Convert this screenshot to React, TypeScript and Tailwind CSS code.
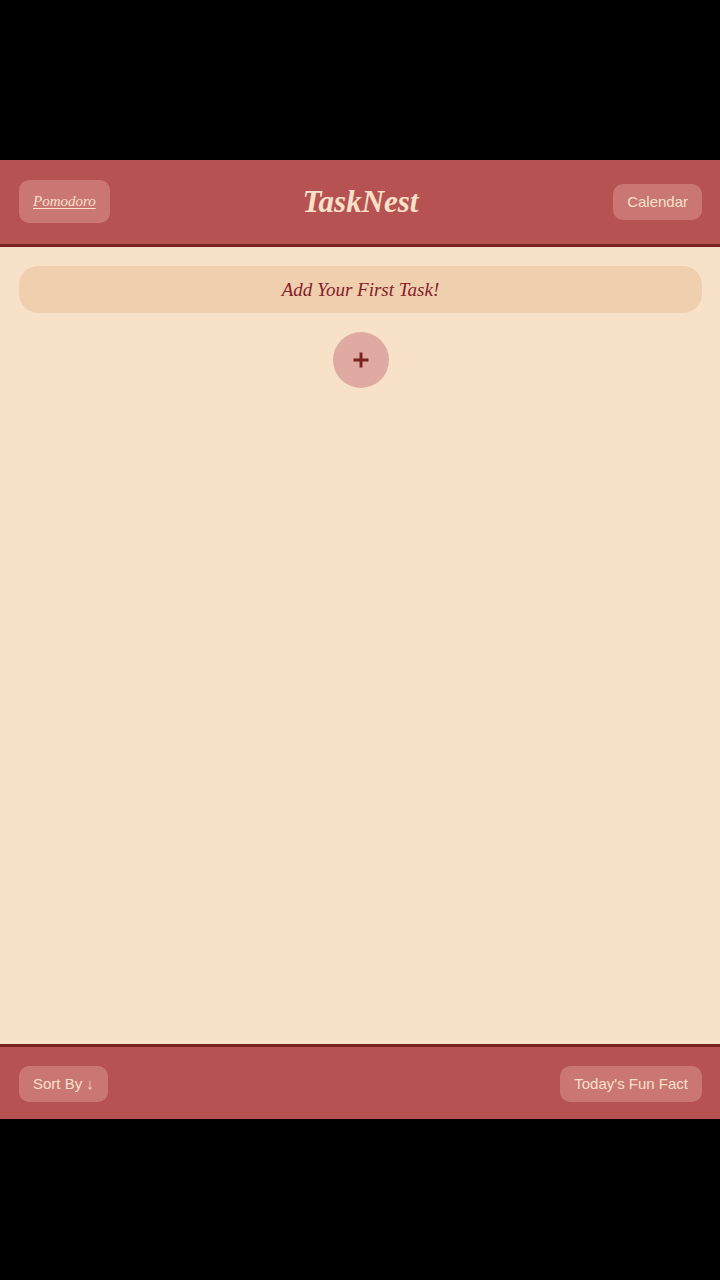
const script = "font-['Apple_Chancery','Liberation_Serif',serif] italic";
const chip = "rounded-[10px] bg-[#ca7673] px-3.5 text-[15px] leading-5 text-[#f8e1c8]";

export default function App() {
  return (
    <div className="flex min-h-screen flex-col bg-black pt-40 pb-[161px] font-['Liberation_Sans',sans-serif]">
      <header className="grid grid-cols-[1fr_auto_1fr] items-center border-b-3 border-[#792321] bg-[#b65251] pt-5 pr-[18px] pb-[21px] pl-[19px]">
        <a
          href="#pomodoro"
          className="justify-self-start rounded-[10px] bg-[#ca7673] px-3.5 py-3 font-['Apple_Chancery','Liberation_Serif',serif] text-[15px] leading-[19px] text-[#f8e1c8] italic underline underline-offset-2"
        >
          Pomodoro
        </a>
        <h1 className={`${script} text-[31px] leading-10 font-bold text-[#f8e1c8]`}>TaskNest</h1>
        <button type="button" className={`${chip} justify-self-end py-2`}>
          Calendar
        </button>
      </header>

      <main className="flex flex-1 flex-col items-center gap-[19px] bg-[#f8e1c9] pt-[19px] pr-[18px] pl-[19px]">
        <p className={`${script} w-full rounded-[19px] bg-[#efcfae] py-3 text-center text-[19px] leading-[23px] text-[#86202a]`}>
          Add Your First Task!
        </p>
        <button
          type="button"
          aria-label="Add task"
          className="flex size-14 items-center justify-center rounded-full bg-[#dfaaa2] text-[#792321]"
        >
          <svg viewBox="0 0 16 16" className="size-4" stroke="currentColor" strokeWidth="3" aria-hidden="true">
            <path d="M8 .5v15M.5 8h15" />
          </svg>
        </button>
      </main>

      <footer className="flex items-center justify-between border-t-3 border-[#792321] bg-[#b65251] pt-[19px] pr-[18px] pb-[17px] pl-[19px]">
        <button type="button" className={`${chip} py-2`}>
          Sort By ↓
        </button>
        <button type="button" className={`${chip} py-2`}>
          Today's Fun Fact
        </button>
      </footer>
    </div>
  );
}
